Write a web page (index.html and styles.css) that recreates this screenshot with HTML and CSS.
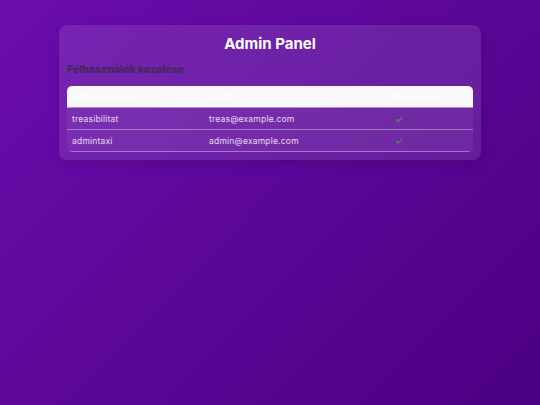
FILE: index.html
```html
<!DOCTYPE html>
<html lang="hu">
<head>
    <meta charset="UTF-8">
    <meta name="viewport" content="width=device-width, initial-scale=1.0">
    <title>Admin Panel</title>
    <link rel="stylesheet" href="styles.css">
</head>
<body>
    <!-- Main admin card -->
    <div class="panel">
        <h1 class="panel-title">Admin Panel</h1>
        <h2 class="section-title">Felhasználók kezelése</h2>

        <!-- User list -->
        <table class="users">
            <thead>
                <tr>
                    <th>Felhasználónév</th>
                    <th>Email</th>
                    <th>Műveletek</th>
                </tr>
            </thead>
            <tbody>
                <tr>
                    <td>treasibilitat</td>
                    <td>treas@example.com</td>
                    <td><span class="check">✓</span></td>
                </tr>
                <tr>
                    <td>admintaxi</td>
                    <td>admin@example.com</td>
                    <td><span class="check">✓</span></td>
                </tr>
            </tbody>
        </table>
    </div>
</body>
</html>
```

FILE: styles.css
```css
/* Page background */
html, body {
    margin: 0;
    padding: 0;
    height: 100%;
}

body {
    font-family: 'Inter', 'Open Sans', sans-serif;
    background: linear-gradient(135deg, #6a0dad 0%, #4b0082 100%);
    color: #fff;
}

/* Card holding everything */
.panel {
    width: 422px;
    margin: 25px auto 0;
    padding: 8px;
    box-sizing: border-box;
    background: rgba(255, 255, 255, 0.1);
    border-radius: 8px;
    box-shadow: 0 4px 12px rgba(0, 0, 0, 0.12);
}

.panel-title {
    margin: 0;
    text-align: center;
    font-size: 15px;
    font-weight: 700;
    line-height: 22px;
    color: #fff;
}

.section-title {
    margin: 7px 0 8px;
    font-size: 10.5px;
    font-weight: 800;
    line-height: 16px;
    color: #3d2a5c;
}

/* Table */
.users {
    width: 100%;
    table-layout: fixed;
    border-collapse: collapse;
    font-size: 8.5px;
    letter-spacing: 0.2px;
    background: rgba(255, 255, 255, 0.05);
    border-radius: 5px;
    overflow: hidden;
}

.users th {
    background: #f8f8fb;
    color: #fff;
    font-weight: 600;
    text-align: left;
    height: 21px;
    padding: 0 5px;
    border-bottom: 1px solid #b88ce0;
}

.users td {
    height: 21px;
    padding: 0 5px;
    color: #eadcf7;
    border-bottom: 1px solid rgba(255, 255, 255, 0.35);
}

.users th:nth-child(1) { width: 127px; }
.users th:nth-child(2) { width: 174px; }

.check {
    color: #4f8a62;
    font-size: 9px;
    font-weight: 700;
    padding-left: 2px;
}
```
